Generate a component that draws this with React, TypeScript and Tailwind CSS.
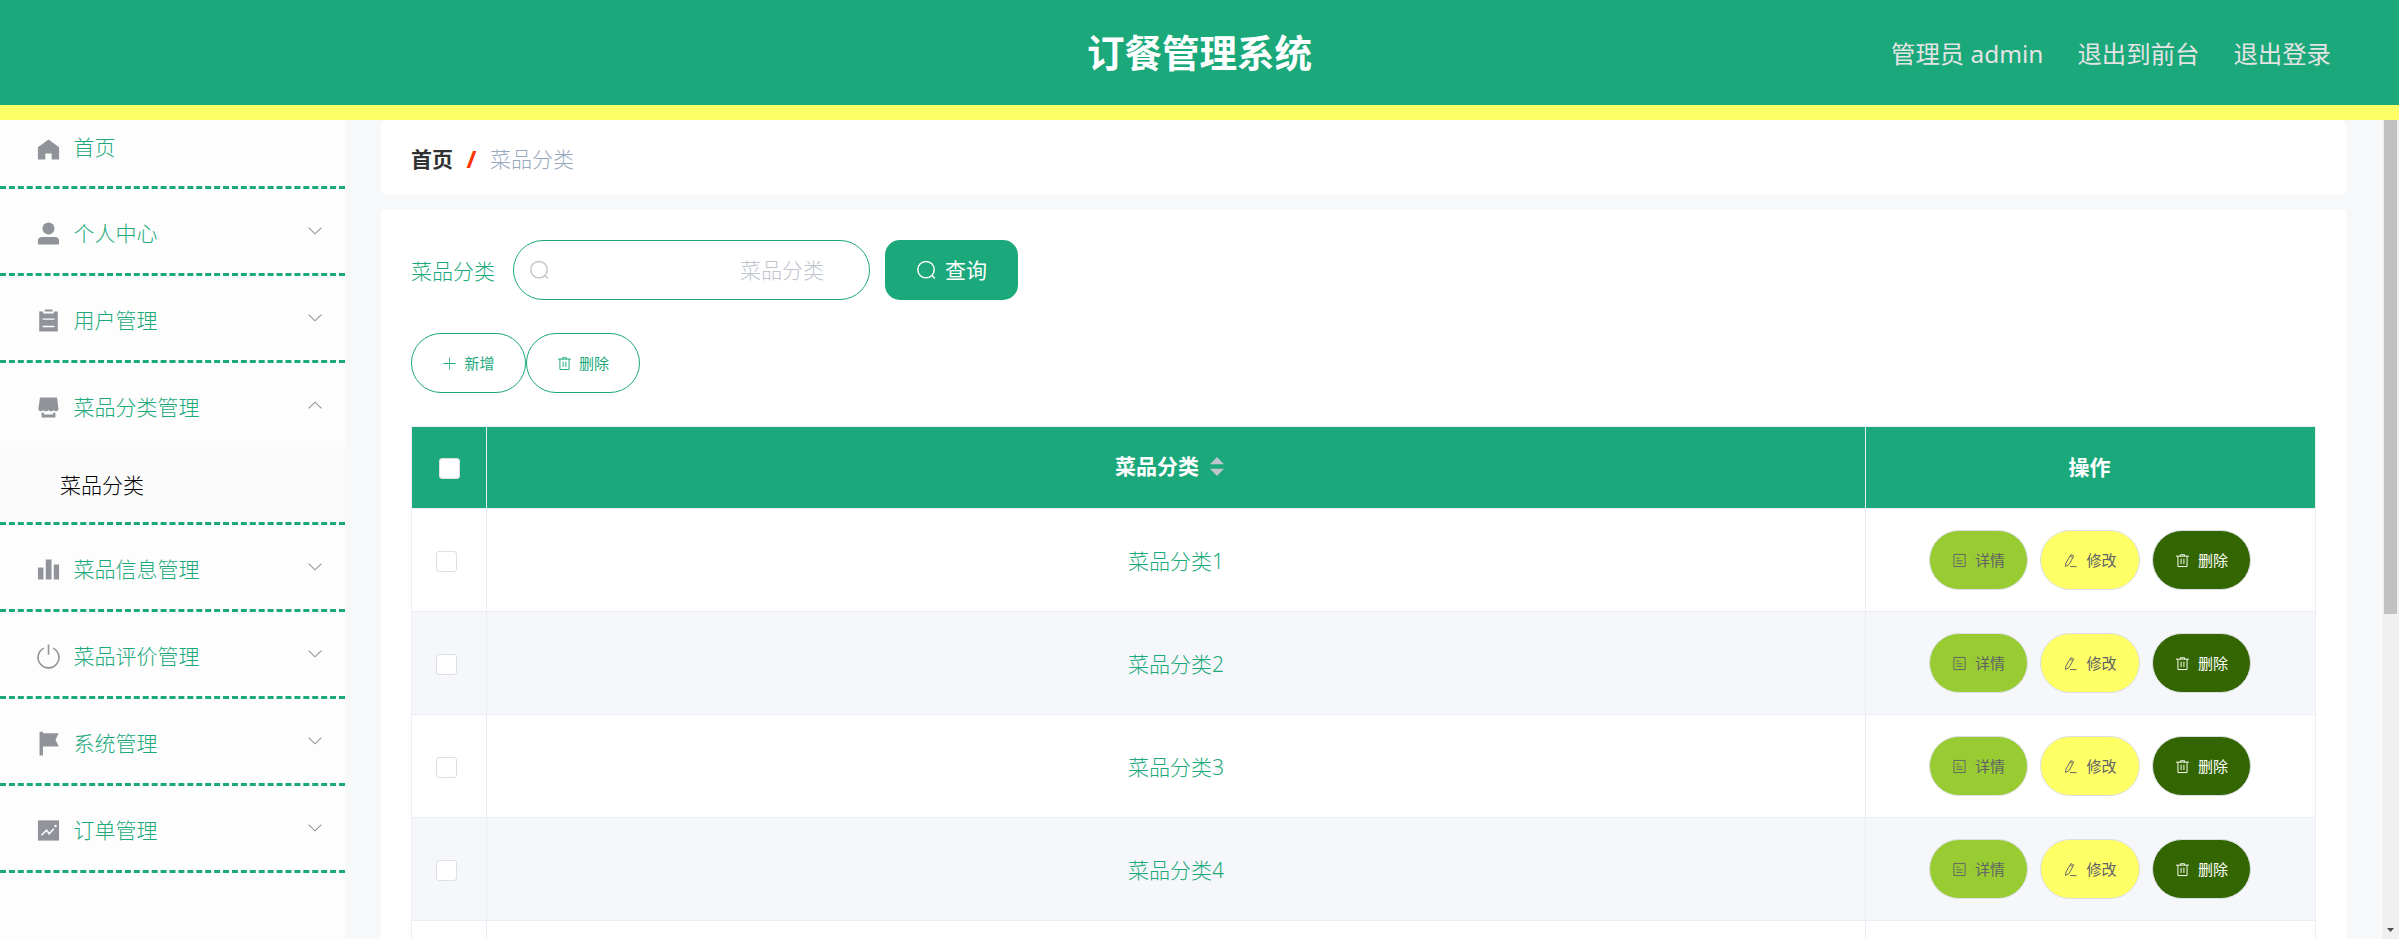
import React from 'react';

type IconProps = { className?: string; size?: number };

const Icon = ({ className, size = 27, children }: IconProps & { children: React.ReactNode }) => (
  <svg viewBox="0 0 1024 1024" width={size} height={size} fill="currentColor" className={className}>
    {children}
  </svg>
);

const HomeIcon = () => (
  <Icon><path d="M512 130 110 430v464h282V660h240v234h282V430z" /></Icon>
);

const UserIcon = () => (
  <Icon>
    <circle cx="512" cy="323" r="228" />
    <path d="M260 640h504c90 0 150 60 150 150v108q0 30-30 30H140q-30 0-30-30V790c0-90 60-150 150-150z" />
  </Icon>
);

const OrderIcon = () => (
  <Icon>
    <path d="M371 95h293v80H371z M160 170h150v80h404v-80h150v758H160z" />
    <path d="M285 462h455M285 739h455" stroke="#fdfdfd" strokeWidth="52" />
  </Icon>
);

const ShopIcon = () => (
  <Icon>
    <path d="M190 133h644l58 440c0 50-40 85-85 85s-70-25-90-52c-20 27-55 52-100 52s-85-25-105-52c-20 27-55 52-100 52s-80-25-100-52c-20 27-50 52-95 52s-90-35-90-85z M250 713h90v60h345v-60h90v178H250z" />
  </Icon>
);

const DataIcon = () => (
  <Icon><path d="M112 435h208v460H112z M408 133h218v762H408z M713 322h200v573H713z" /></Icon>
);

const PowerIcon = () => (
  <Icon>
    <path d="M335 195A395 395 0 1 0 689 195M512 57v390" fill="none" stroke="currentColor" strokeWidth="60" />
  </Icon>
);

const FlagIcon = () => (
  <Icon><path d="M172 68h130v53h600l-125 253 125 252H302v341H172z" /></Icon>
);

const MarketingIcon = () => (
  <Icon>
    <path d="M112 128h800v767H112z" />
    <path d="M246 690 436 500 538 637 713 447" fill="none" stroke="#fdfdfd" strokeWidth="60" />
    <circle cx="777" cy="345" r="48" fill="#fdfdfd" />
  </Icon>
);

const SearchIcon = ({ size, className }: IconProps) => (
  <Icon size={size} className={className}>
    <path d="M765 740 920 900" stroke="currentColor" strokeWidth="72" />
    <circle cx="488" cy="470" r="400" fill="none" stroke="currentColor" strokeWidth="72" />
  </Icon>
);

const PlusIcon = () => (
  <Icon size={15}><path d="M486 96h54v390h388v54H540v388h-54V540H96v-54h390z" /></Icon>
);

const TrashIcon = () => (
  <Icon size={15}>
    <path d="M70 215h884M370 215v-95h284v95M200 215v710h624V215M416 390v360M608 390v360" fill="none" stroke="currentColor" strokeWidth="66" />
  </Icon>
);

const DocumentIcon = () => (
  <Icon size={15}>
    <path d="M130 98h764v828H130zM300 350h200M300 530h400M300 710h424" fill="none" stroke="currentColor" strokeWidth="64" />
  </Icon>
);

const EditIcon = () => (
  <Icon size={15}>
    <path d="M540 110 730 200 420 780 170 920 200 690zM490 225 670 310M480 928h450" fill="none" stroke="currentColor" strokeWidth="66" />
  </Icon>
);

const Arrow = ({ open }: { open?: boolean }) => (
  <svg width="14" height="8" viewBox="0 0 14 8" fill="none" stroke="#909399" strokeWidth="1.1" className={open ? 'rotate-180' : ''}>
    <path d="M0.6 0.6 7 6.8 13.4 0.6" />
  </svg>
);

const menus = [
  { title: '个人中心', icon: <UserIcon /> },
  { title: '用户管理', icon: <OrderIcon /> },
  { title: '菜品分类管理', icon: <ShopIcon />, children: ['菜品分类'] },
  { title: '菜品信息管理', icon: <DataIcon /> },
  { title: '菜品评价管理', icon: <PowerIcon /> },
  { title: '系统管理', icon: <FlagIcon /> },
  { title: '订单管理', icon: <MarketingIcon /> },
];

const rows = ['菜品分类1', '菜品分类2', '菜品分类3', '菜品分类4'];

const Header = () => (
  <header className="grid h-[120px] shrink-0 grid-cols-[1fr_auto_1fr] items-center border-b-[15px] border-[#ffff66] bg-[#1ba97b]">
    <h1 className="col-start-2 text-[37.5px] leading-none font-bold text-white">订餐管理系统</h1>
    <div className="flex justify-end gap-[34px] pt-[3px] pr-[68px] text-[24.4px] text-[#e4e4e4]">
      <span>管理员 admin</span>
      <span>退出到前台</span>
      <span>退出登录</span>
    </div>
  </header>
);

const Sidebar = () => (
  <aside className="w-[345px] shrink-0 bg-[#fdfdfd] font-light text-[#1ba97b]">
    <div className="flex h-[69px] border-b-[3px] border-dashed border-[#1ba97b] pt-4 pl-[34.5px]">
      <span className="text-[#909399]"><HomeIcon /></span>
      <span className="-mt-0.5 ml-3 leading-[26px]">首页</span>
    </div>
    {menus.map((menu) => (
      <div key={menu.title} className="border-b-[3px] border-dashed border-[#1ba97b]">
        <div className="flex h-[84px] items-center pr-[23px] pl-[34.5px]">
          <span className="pt-[5px] text-[#909399]">{menu.icon}</span>
          <span className="ml-3 flex-1 pt-1">{menu.title}</span>
          <Arrow open={!!menu.children} />
        </div>
        {menu.children?.map((child) => (
          <div key={child} className="flex h-[75px] items-center bg-[#fbfbfb] pt-0.5 pl-[60px] text-black">{child}</div>
        ))}
      </div>
    ))}
  </aside>
);

const Toolbar = () => (
  <>
    <div className="flex h-[60px] items-center">
      <span className="w-[102px] pt-0.5 text-[#1ba97b]">菜品分类</span>
      <div className="flex h-[60px] w-[357px] items-center justify-between rounded-[30px] border border-[#1ba97b] pr-[45px] pl-[15px] text-[#c0c4cc]">
        <SearchIcon size={21} />
        <span>菜品分类</span>
      </div>
      <button className="ml-[15px] flex h-[60px] w-[133px] items-center justify-center gap-2 rounded-[15px] bg-[#1ba97b] font-normal text-white">
        <SearchIcon size={21} />
        查询
      </button>
    </div>
    <div className="mt-[33px] flex text-[15px] font-normal text-[#1ba97b]">
      <button className="flex h-[60px] w-[115px] items-center justify-center gap-[7px] rounded-[30px] border border-[#1ba97b]">
        <PlusIcon />
        新增
      </button>
      <button className="flex h-[60px] w-[114px] items-center justify-center gap-[7px] rounded-[30px] border border-[#1ba97b]">
        <TrashIcon />
        删除
      </button>
    </div>
  </>
);

const Checkbox = () => (
  <span className="block h-[21px] w-[21px] rounded-[3px] border border-[#dcdfe6] bg-white" />
);

const DataTable = () => (
  <div className="mt-[33px] grid grid-cols-[75px_1379px_450px] border-t border-l border-[#ebeef5]">
    <div className="flex h-[82px] items-center border-r border-b border-[#ebeef5] bg-[#1ba97b] pt-0.5 pl-[27px]">
      <Checkbox />
    </div>
    <div className="flex h-[82px] items-center justify-center gap-[11px] border-r border-b border-[#ebeef5] bg-[#1ba97b] pr-[13px] pb-[3px] font-bold text-white">
      菜品分类
      <svg width="14" height="19" viewBox="0 0 14 19" fill="#c0c4cc">
        <path d="M0 7.3 7 0l7 7.3zM0 11.7h14L7 19z" />
      </svg>
    </div>
    <div className="flex h-[82px] items-center justify-center border-r border-b border-[#ebeef5] bg-[#1ba97b] pr-0.5 font-bold text-white">操作</div>
    {rows.map((name, i) => {
      const cell = i % 2 ? 'flex h-[103px] items-center border-r border-b border-[#ebeef5] bg-[#f5f7fa]' : 'flex h-[103px] items-center border-r border-b border-[#ebeef5] bg-white';
      return (
        <React.Fragment key={name}>
          <div className={`${cell} pt-[3px] pl-6`}><Checkbox /></div>
          <div className={`${cell} justify-center pt-0.5 text-[#1ba97b]`}>{name}</div>
          <div className={`${cell} justify-center pr-px text-[15px] font-normal text-[#606266]`}>
            <button className="flex h-[60px] w-[99px] items-center justify-center gap-2 rounded-[30px] border border-[#dcdfe6] bg-[#99cc33]">
              <DocumentIcon />
              详情
            </button>
            <button className="ml-3 flex h-[60px] w-[100px] items-center justify-center gap-2 rounded-[30px] border border-[#dcdfe6] bg-[#ffff66]">
              <EditIcon />
              修改
            </button>
            <button className="ml-3 flex h-[60px] w-[99px] items-center justify-center gap-2 rounded-[30px] border border-[#dcdfe6] bg-[#336600] text-white">
              <TrashIcon />
              删除
            </button>
          </div>
        </React.Fragment>
      );
    })}
    <div className="h-[103px] border-r border-[#ebeef5]" />
    <div className="h-[103px] border-r border-[#ebeef5]" />
    <div className="h-[103px] border-r border-[#ebeef5]" />
  </div>
);

const ScrollBar = () => (
  <div className="flex w-[17px] shrink-0 flex-col items-center justify-between bg-[#f0f0f0]">
    <div className="h-[494px] w-[13px] bg-[#c1c1c1]" />
    <svg width="7" height="4" viewBox="0 0 7 4" fill="#505050" className="mb-[7px]">
      <path d="M0 0h7L3.5 4z" />
    </svg>
  </div>
);

export default function App() {
  return (
    <div className="flex h-[939px] w-[2399px] flex-col overflow-hidden bg-[#f7f8fa] font-['Noto_Sans','Noto_Sans_CJK_SC',sans-serif] text-[21px] leading-none">
      <Header />
      <div className="flex min-h-0 flex-1">
        <Sidebar />
        <main className="flex-1 overflow-hidden pr-9 pl-9 font-light">
          <div className="flex h-[75px] items-center rounded-md bg-white px-[30px] pt-[3px]">
            <span className="font-bold text-[#303133]">首页</span>
            <span className="mx-[13.5px] text-2xl leading-none font-bold text-[#ff3300]">/</span>
            <span className="text-[#97a8be]">菜品分类</span>
          </div>
          <div className="mt-[15px] h-[1000px] bg-white p-[30px]">
            <Toolbar />
            <DataTable />
          </div>
        </main>
        <ScrollBar />
      </div>
    </div>
  );
}
